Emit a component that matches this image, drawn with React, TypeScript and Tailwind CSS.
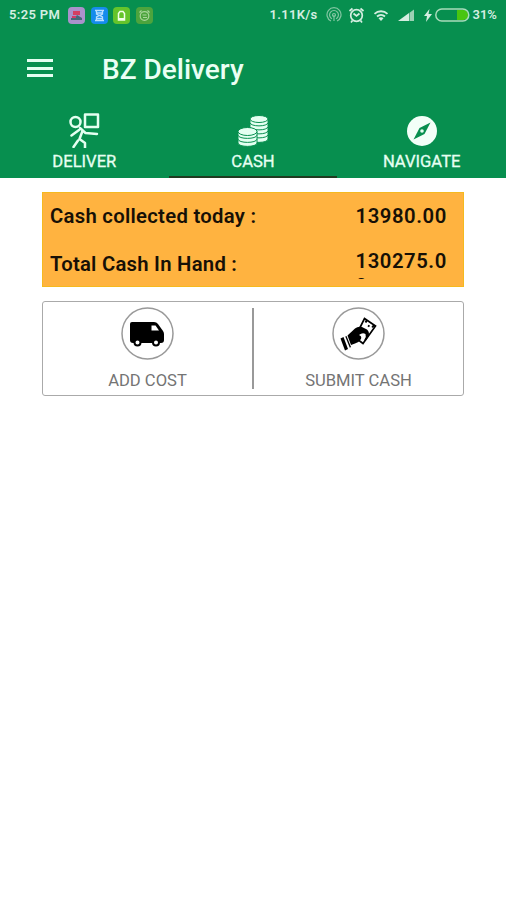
import React from "react";

function StatusBar() {
  return (
    <div className="flex h-[30px] items-center pl-[9px] text-[13px] font-semibold text-[#d5eee1]">
      <span className="w-[59px] whitespace-nowrap tracking-[0.35px]">5:25 PM</span>
      <div className="flex gap-[5.5px]">
        <svg width="17" height="17" viewBox="0 0 17 17">
          <rect width="17" height="17" rx="4" fill="#aa92cb" />
          <path d="M5 4h7v4H5z" fill="#d33f62" />
          <path d="M3 11h4l2-3 5 3v2H3z" fill="#466879" />
          <path d="M4 9h4v2H4z" fill="#d83967" />
        </svg>
        <svg width="17" height="17" viewBox="0 0 17 17">
          <rect width="17" height="17" rx="4" fill="#158cec" />
          <path d="M4 3.5h9M5.5 4v3l3 1.500 3-1.500V4M4 13.500h9M5.500 13v-3l3-1.500 3 1.500v3M6 6h5M6 11.500h5" stroke="#b9e0ff" strokeWidth="1.3" fill="none" />
        </svg>
        <svg width="17" height="17" viewBox="0 0 17 17">
          <rect width="17" height="17" rx="4" fill="#65c42b" />
          <path d="M5.500 13V6.500L7 4.500h3l1.500 2V13z" fill="#65c42b" stroke="#f1ffe9" strokeWidth="1.500" />
          <path d="M6 11h5v2H6z" fill="#f1ffe9" />
        </svg>
        <svg width="17" height="17" viewBox="0 0 17 17">
          <rect width="17" height="17" rx="4" fill="#4da43d" />
          <g fill="none" stroke="#a9d69b" strokeWidth="1.2">
            <circle cx="8.500" cy="9" r="4.300" />
            <path d="M3.500 5.500l2-2M13.500 5.500l-2-2M6.500 8h4M7 10.500h4" />
          </g>
        </svg>
      </div>
      <span className="ml-[117px] w-[56px] whitespace-nowrap tracking-[0.3px]">1.11K/s</span>
      <svg width="16" height="16" viewBox="0 0 16 16" fill="none" stroke="#83c6a2" strokeWidth="1.2">
        <path d="M5 14a7 7 0 1 1 6 0M6 11.800a4.400 4.400 0 1 1 4 0M8 8v6" />
        <circle cx="8" cy="8" r="1.500" />
      </svg>
      <svg className="ml-[6px]" width="17" height="17" viewBox="0 0 17 17" fill="none" stroke="#d5eee1" strokeWidth="1.700">
        <circle cx="8.500" cy="8.500" r="5.800" />
        <path d="M1.500 4l3-2.500M15.500 4l-3-2.500M5.500 6.500l3 2.500 3-2.500M4.500 13.500l-1.500 2M12.500 13.500l1.500 2" />
      </svg>
      <svg className="ml-[8px]" width="16" height="16" viewBox="0 0 16 16" fill="none" stroke="#d5eee1" strokeWidth="1.800">
        <path d="M1.500 6.800a9.500 9.500 0 0 1 13 0M4 9.500a6 6 0 0 1 8 0" />
        <path d="M5.500 11.300a3.300 3.300 0 0 1 5 0L8 14z" fill="#d5eee1" stroke="none" />
      </svg>
      <svg className="ml-[9px]" width="17" height="14" viewBox="0 0 17 14">
        <path d="M0 13l11-8v8z" fill="#d5eee1" />
        <path d="M11.500 4.700L16 1.500V13h-4.500z" fill="#9bd1b4" />
      </svg>
      <svg className="ml-[8px]" width="10" height="15" viewBox="0 0 10 15">
        <path d="M6.500 1L1 8h3l-1 6 6-8H5.500z" fill="#d5eee1" />
      </svg>
      <svg className="ml-[2px]" width="35" height="14" viewBox="0 0 35 14">
        <path d="M22 2h6.500a5 5 0 0 1 0 10H22z" fill="#49c510" />
        <rect x=".8" y="1" width="33" height="12" rx="6" fill="none" stroke="#a9dcbb" strokeWidth="1.500" />
      </svg>
      <span className="ml-[3px] whitespace-nowrap">31%</span>
    </div>
  );
}

function DeliverIcon() {
  return (
    <svg width="34" height="38" viewBox="0 0 34 38" fill="none" stroke="#e4fff1" strokeWidth="2.500" strokeLinecap="round" strokeLinejoin="round">
      <rect x="18" y="4.500" width="13" height="12.500" />
      <circle cx="8.500" cy="12" r="5" />
      <path d="M13 18l5.500 5L30 24M4.500 25.500L12 20M15.500 21l-3 8 5.500 4v5M11 30.500L6.500 37" />
    </svg>
  );
}

function CoinsIcon() {
  return (
    <svg width="34" height="38" viewBox="0 0 34 38" fill="#e4fff1">
      <g stroke="#078f4f" strokeWidth="1">
        <path d="M14 24.500v4.500c0 4.500 18 4.500 18 0v-4.500z" />
        <path d="M14 20.500v4c0 4.500 18 4.500 18 0v-4z" />
        <path d="M14 16.500v4c0 4.500 18 4.500 18 0v-4z" />
        <path d="M14 12.500v4c0 4.500 18 4.500 18 0v-4z" />
        <path d="M14 9v3.500c0 4.500 18 4.500 18 0V9z" />
        <ellipse cx="23" cy="9" rx="9" ry="3.500" />
        <path d="M2 29v4c0 4.500 19 4.500 19 0v-4z" />
        <path d="M2 25v4c0 4.500 19 4.500 19 0v-4z" />
        <path d="M2 21.500v3.500c0 4.500 19 4.500 19 0v-3.500z" />
        <ellipse cx="11.500" cy="21.500" rx="9.500" ry="4" />
      </g>
    </svg>
  );
}

function CompassIcon() {
  return (
    <svg width="34" height="38" viewBox="0 0 34 38">
      <circle cx="17" cy="21" r="15" fill="#f2fff8" />
      <path d="M25.500 12.500l-6 11.500-11 5.500 6-11.500z" fill="#078f4f" />
      <circle cx="17" cy="21" r="1.800" fill="#e4fff1" />
    </svg>
  );
}

function Tab({ label, active, children }: { label: string; active?: boolean; children: React.ReactNode }) {
  return (
    <div className={"flex flex-1 flex-col items-center border-b-[2.500px] " + (active ? "border-[#203b20]" : "border-[#078f4f]")}>
      {children}
      <span className="mt-[4px] text-[16.600px] leading-[20px] text-[#e6fff2] [-webkit-text-stroke:0.3px_#e6fff2]">{label}</span>
    </div>
  );
}

function VanIcon() {
  return (
    <svg width="53" height="53" viewBox="0 0 53 53">
      <circle cx="26.500" cy="26.500" r="25.500" fill="#fff" stroke="#999" strokeWidth="1.500" />
      <path d="M11 15h22q2.500 0 4 2l5 7q1 1.500 1 3v6q0 3-3 3H12q-3 0-3-3V17q0-2 2-2z" fill="#000" />
      <path d="M30.500 18.500h4l3.500 5h-7.500z" fill="#fff" />
      <circle cx="16.500" cy="35.500" r="3" fill="#fff" stroke="#000" strokeWidth="2" />
      <circle cx="35" cy="35.500" r="3" fill="#fff" stroke="#000" strokeWidth="2" />
    </svg>
  );
}

function HandCashIcon() {
  return (
    <svg width="53" height="53" viewBox="0 0 53 53">
      <circle cx="26.500" cy="26.500" r="25.500" fill="#fff" stroke="#999" strokeWidth="1.500" />
      <path d="M32.500 11.500l11 7.500L31 36.500l-8-6z" fill="#fff" stroke="#000" strokeWidth="1.700" />
      <path d="M35 13l-1.500 2.500M42 18l-1.800 2.500M36 18.500l1.500 1" stroke="#000" strokeWidth="2" />
      <path d="M8.500 31.500l3-1.500 4.500 12-3 1.500z" fill="#000" />
      <path d="M13.300 29.500l1.200-.5 4.500 11-1.200.7z" fill="#000" />
      <path d="M15.500 28.500L23 21.500q3-2.500 7-1.500l5 2.500q3 3 1.500 7l-2.500 4q-2 1-1.500-1 2-3 1-5.500-3-2-6.500 1 3 1 2 4-2 3.500-6 4.500L19 38z" fill="#000" />
    </svg>
  );
}

export default function App() {
  return (
    <div className="h-[900px] w-[506px] overflow-hidden bg-white font-['Roboto',sans-serif]">
      <header className="flex h-[177.500px] flex-col bg-[#078f4f]">
        <StatusBar />
        <div className="flex h-[76px] items-center pl-[27px]">
          <div className="flex w-[75px] flex-col gap-[4.500px]">
            <div className="h-[3px] w-[26px] bg-[#e4fff1]" />
            <div className="h-[3px] w-[26px] bg-[#e4fff1]" />
            <div className="h-[3px] w-[26px] bg-[#e4fff1]" />
          </div>
          <h1 className="mt-[4px] whitespace-nowrap text-[28px] font-medium text-[#eafff4]">BZ Delivery</h1>
        </div>
        <nav className="flex flex-1 pt-[3.500px]">
          <Tab label="DELIVER"><DeliverIcon /></Tab>
          <Tab label="CASH" active><CoinsIcon /></Tab>
          <Tab label="NAVIGATE"><CompassIcon /></Tab>
        </nav>
      </header>
      <main className="px-[42px] pt-[14.500px]">
        <section className="h-[95px] border border-[#f5b91f] bg-[#ffb340] pl-[7px] text-[20.300px] font-semibold leading-[25px] text-[#171006]">
          <div className="flex pt-[11px]">
            <span className="w-[305.500px] tracking-[0.280px]">Cash collected today :</span>
            <span className="tracking-[0.550px]">13980.00</span>
          </div>
          <div className="flex h-[57px] pt-[20px]">
            <span className="w-[305.500px] pt-[3px] tracking-[0.250px]">Total Cash In Hand :</span>
            <span className="h-[30px] w-[98px] overflow-hidden break-all tracking-[0.550px]">130275.00</span>
          </div>
        </section>
        <section className="mt-[14px] flex h-[95px] items-start rounded-[3px] border-[1.500px] border-[#aaa] text-[16.600px] text-[#747474]">
          <div className="flex flex-1 flex-col items-center pt-[5px]">
            <VanIcon />
            <span className="mt-[9px] leading-[24px]">ADD COST</span>
          </div>
          <div className="mt-[6px] h-[81px] w-[2px] bg-[#999]" />
          <div className="flex flex-1 flex-col items-center pt-[5px]">
            <HandCashIcon />
            <span className="mt-[9px] leading-[24px]">SUBMIT CASH</span>
          </div>
        </section>
      </main>
    </div>
  );
}
